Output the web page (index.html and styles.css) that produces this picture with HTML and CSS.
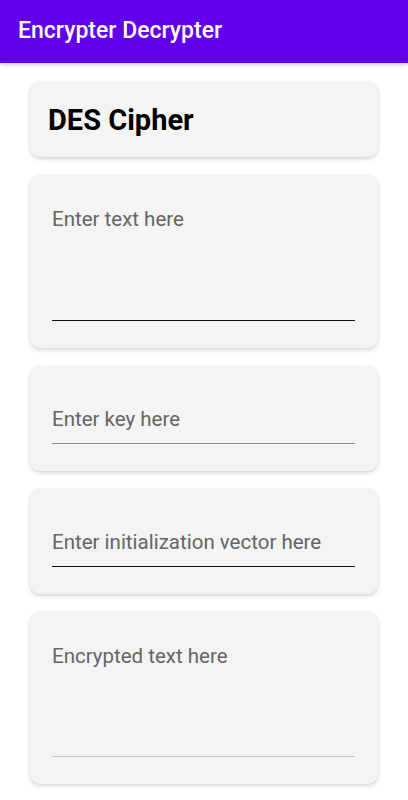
FILE: index.html
```html
<!DOCTYPE html>
<html lang="en">
<head>
<meta charset="utf-8">
<title>Encrypter Decrypter</title>
<link rel="stylesheet" href="styles.css">
</head>
<body>
<header class="app-bar">
  <h1 class="app-title">Encrypter Decrypter</h1>
</header>
<main class="content">
  <section class="card card-title">
    <h2 class="cipher-name">DES Cipher</h2>
  </section>
  <section class="card card-multi">
    <div class="field field-multi line-dark">Enter text here</div>
  </section>
  <section class="card card-single">
    <div class="field field-single line-mid">Enter key here</div>
  </section>
  <section class="card card-single">
    <div class="field field-single line-dark">Enter initialization vector here</div>
  </section>
  <section class="card card-out">
    <div class="field field-out line-light">Encrypted text here</div>
  </section>
</main>
</body>
</html>
```

FILE: styles.css
```css
* { box-sizing: border-box; }
html, body { margin: 0; padding: 0; background: #ffffff; }
body {
  font-family: Roboto, "Noto Sans", "Liberation Sans", sans-serif;
  width: 408px;
  height: 800px;
  overflow: hidden;
}
.app-bar {
  height: 63px;
  background: #6200ee;
  display: flex;
  align-items: center;
  padding: 0 18px;
  box-shadow: 0 2px 4px rgba(0,0,0,0.18);
  position: relative;
  z-index: 1;
}
.app-title {
  margin: 0;
  color: #ffffff;
  font-size: 23px;
  font-weight: 500;
  letter-spacing: 0;
  padding-bottom: 2px;
}
.content {
  display: flex;
  flex-direction: column;
  align-items: center;
  gap: 18px;
  padding-top: 19px;
}
.card {
  width: 348px;
  background: #f4f4f4;
  border-radius: 10px;
  box-shadow: 0 2px 4px rgba(0,0,0,0.16), 0 0 2px rgba(0,0,0,0.06);
  padding: 0 23px 27px 22px;
}
.card-title {
  height: 75px;
  display: flex;
  align-items: center;
  padding: 0 18px 0 18px;
}
.cipher-name {
  margin: 0;
  font-size: 29px;
  font-weight: 700;
  color: #000000;
}
.field {
  font-size: 20.5px;
  line-height: 27px;
  color: #656565;
  border-bottom: 1px solid #000;
}
.card-multi { padding-top: 31px; }
.field-multi { height: 115px; }
.card-out { padding-top: 31px; }
.field-out { height: 114px; }
.card-single { padding-top: 40px; }
.field-single { height: 38px; }
.line-dark { border-bottom-color: #111111; }
.line-mid { border-bottom-color: #8c8c8c; }
.line-light { border-bottom-color: #c9c9c9; }
```
